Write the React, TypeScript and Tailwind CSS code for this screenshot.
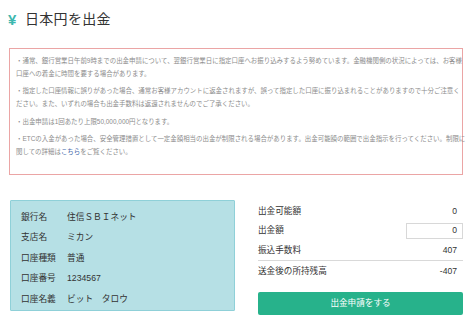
import React from "react";

const font = { fontFamily: '"Liberation Sans", "Noto Sans CJK JP", sans-serif' };

export default function App() {
  return (
    <div className="w-[474px] h-[325px] bg-white overflow-hidden text-[#333]" style={font}>
      <div className="flex items-center h-[37px] pl-[8px] pt-[1px]">
        <span className="text-[#3db7ae] text-[15px] font-bold w-[17px] leading-none">¥</span>
        <span className="text-[14px] leading-none tracking-[0.3px]">日本円を出金</span>
      </div>
      <div className="ml-[9px] mt-[11px] w-[454px] h-[127px] border border-[#eba5a5] pl-[6px] pt-[5px] text-[6.45px] leading-[13px] text-[#8c8c8c] whitespace-nowrap">
        <p>・通常、銀行営業日午前9時までの出金申請について、翌銀行営業日に指定口座へお振り込みするよう努めています。金融機関側の状況によっては、お客様<br />口座への着金に時間を要する場合があります。</p>
        <p className="mt-[4px]">・指定した口座情報に誤りがあった場合、通常お客様アカウントに返金されますが、誤って指定した口座に振り込まれることがありますので十分ご注意く<br />ださい。また、いずれの場合も出金手数料は返還されませんのでご了承ください。</p>
        <p className="mt-[5px]">・出金申請は1回あたり上限50,000,000円となります。</p>
        <p className="mt-[4px]">・ETCの入金があった場合、安全管理措置として一定金額相当の出金が制限される場合があります。出金可能額の範囲で出金指示を行ってください。制限に<br />関しての詳細は<span className="text-[#3a63a8]">こちら</span>をご覧ください。</p>
      </div>
      <div className="flex mt-[25px] ml-[10px] gap-[23px]">
        <div className="w-[225px] h-[111px] bg-[#b6e0e5] border border-[#8fd0d8] rounded-[1px] pl-[10px] pt-[6px] text-[8.7px]">
          {[
            ["銀行名", "住信ＳＢＩネット"],
            ["支店名", "ミカン"],
            ["口座種類", "普通"],
            ["口座番号", "1234567"],
            ["口座名義", "ビット　タロウ"],
          ].map(([k, v]) => (
            <div key={k} className="flex h-[20.5px] items-center">
              <span className="w-[46px]">{k}</span>
              <span>{v}</span>
            </div>
          ))}
        </div>
        <div className="w-[205px] text-[8.6px] pt-[2px]">
          <div className="flex justify-between items-center h-[19px] pr-[6px]">
            <span>出金可能額</span>
            <span>0</span>
          </div>
          <div className="flex justify-between items-center h-[19px]">
            <span>出金額</span>
            <div className="w-[57px] h-[16px] border border-[#d8d8d8] flex items-center justify-end pr-[5px]">0</div>
          </div>
          <div className="flex justify-between items-center h-[21px] pr-[6px] border-b border-[#d9d9d9]">
            <span>振込手数料</span>
            <span>407</span>
          </div>
          <div className="flex justify-between items-center h-[20px] pr-[6px]">
            <span>送金後の所持残高</span>
            <span>-407</span>
          </div>
          <button className="mt-[11px] w-[205px] h-[23px] bg-[#27b28b] rounded-[2px] text-white text-[8.6px] flex items-center justify-center">
            出金申請をする
          </button>
        </div>
      </div>
    </div>
  );
}
